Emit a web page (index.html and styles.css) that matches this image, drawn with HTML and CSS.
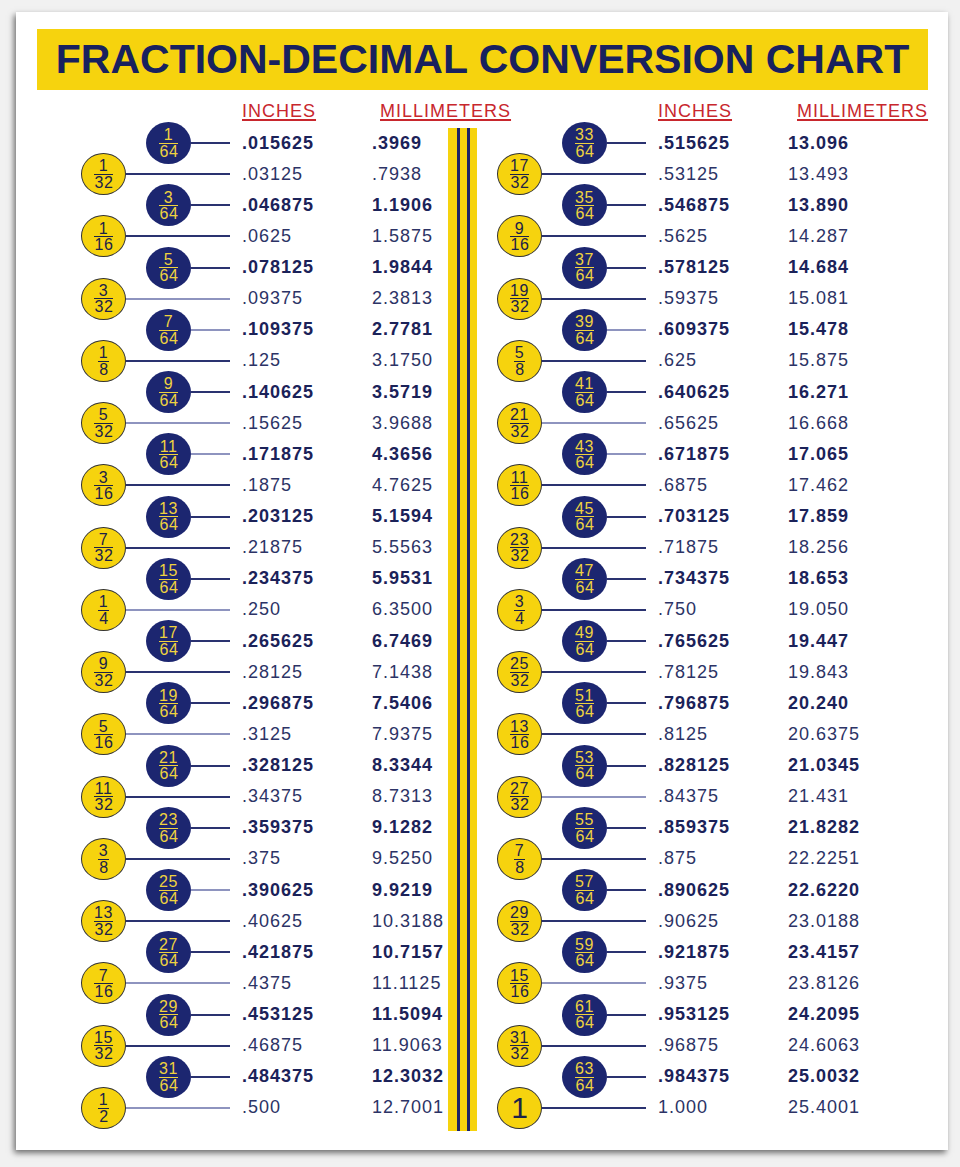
FILE: index.html
```html
<!DOCTYPE html>
<html>
<head>
<meta charset="utf-8">
<title>Fraction-Decimal Conversion Chart</title>
<link rel="stylesheet" href="styles.css">
</head>
<body>
<div class="card">
  <div class="banner">FRACTION-DECIMAL CONVERSION CHART</div>
  <div class="chart">
    <div class="col">
      <div class="hd"><span class="hi">INCHES</span><span class="hm">MILLIMETERS</span></div>
      <div class="rows">
        <div class="row n"><span class="c"><b>1</b><i>64</i></span><span class="ln"></span><span class="in">.015625</span><span class="mm">.3969</span></div>
        <div class="row y"><span class="c"><b>1</b><i>32</i></span><span class="ln"></span><span class="in">.03125</span><span class="mm">.7938</span></div>
        <div class="row n"><span class="c"><b>3</b><i>64</i></span><span class="ln"></span><span class="in">.046875</span><span class="mm">1.1906</span></div>
        <div class="row y"><span class="c"><b>1</b><i>16</i></span><span class="ln"></span><span class="in">.0625</span><span class="mm">1.5875</span></div>
        <div class="row n"><span class="c"><b>5</b><i>64</i></span><span class="ln"></span><span class="in">.078125</span><span class="mm">1.9844</span></div>
        <div class="row y l"><span class="c"><b>3</b><i>32</i></span><span class="ln"></span><span class="in">.09375</span><span class="mm">2.3813</span></div>
        <div class="row n l"><span class="c"><b>7</b><i>64</i></span><span class="ln"></span><span class="in">.109375</span><span class="mm">2.7781</span></div>
        <div class="row y"><span class="c"><b>1</b><i>8</i></span><span class="ln"></span><span class="in">.125</span><span class="mm">3.1750</span></div>
        <div class="row n"><span class="c"><b>9</b><i>64</i></span><span class="ln"></span><span class="in">.140625</span><span class="mm">3.5719</span></div>
        <div class="row y l"><span class="c"><b>5</b><i>32</i></span><span class="ln"></span><span class="in">.15625</span><span class="mm">3.9688</span></div>
        <div class="row n l"><span class="c"><b>11</b><i>64</i></span><span class="ln"></span><span class="in">.171875</span><span class="mm">4.3656</span></div>
        <div class="row y"><span class="c"><b>3</b><i>16</i></span><span class="ln"></span><span class="in">.1875</span><span class="mm">4.7625</span></div>
        <div class="row n"><span class="c"><b>13</b><i>64</i></span><span class="ln"></span><span class="in">.203125</span><span class="mm">5.1594</span></div>
        <div class="row y"><span class="c"><b>7</b><i>32</i></span><span class="ln"></span><span class="in">.21875</span><span class="mm">5.5563</span></div>
        <div class="row n"><span class="c"><b>15</b><i>64</i></span><span class="ln"></span><span class="in">.234375</span><span class="mm">5.9531</span></div>
        <div class="row y l"><span class="c"><b>1</b><i>4</i></span><span class="ln"></span><span class="in">.250</span><span class="mm">6.3500</span></div>
        <div class="row n"><span class="c"><b>17</b><i>64</i></span><span class="ln"></span><span class="in">.265625</span><span class="mm">6.7469</span></div>
        <div class="row y"><span class="c"><b>9</b><i>32</i></span><span class="ln"></span><span class="in">.28125</span><span class="mm">7.1438</span></div>
        <div class="row n"><span class="c"><b>19</b><i>64</i></span><span class="ln"></span><span class="in">.296875</span><span class="mm">7.5406</span></div>
        <div class="row y l"><span class="c"><b>5</b><i>16</i></span><span class="ln"></span><span class="in">.3125</span><span class="mm">7.9375</span></div>
        <div class="row n"><span class="c"><b>21</b><i>64</i></span><span class="ln"></span><span class="in">.328125</span><span class="mm">8.3344</span></div>
        <div class="row y"><span class="c"><b>11</b><i>32</i></span><span class="ln"></span><span class="in">.34375</span><span class="mm">8.7313</span></div>
        <div class="row n"><span class="c"><b>23</b><i>64</i></span><span class="ln"></span><span class="in">.359375</span><span class="mm">9.1282</span></div>
        <div class="row y"><span class="c"><b>3</b><i>8</i></span><span class="ln"></span><span class="in">.375</span><span class="mm">9.5250</span></div>
        <div class="row n l"><span class="c"><b>25</b><i>64</i></span><span class="ln"></span><span class="in">.390625</span><span class="mm">9.9219</span></div>
        <div class="row y"><span class="c"><b>13</b><i>32</i></span><span class="ln"></span><span class="in">.40625</span><span class="mm">10.3188</span></div>
        <div class="row n"><span class="c"><b>27</b><i>64</i></span><span class="ln"></span><span class="in">.421875</span><span class="mm">10.7157</span></div>
        <div class="row y l"><span class="c"><b>7</b><i>16</i></span><span class="ln"></span><span class="in">.4375</span><span class="mm">11.1125</span></div>
        <div class="row n"><span class="c"><b>29</b><i>64</i></span><span class="ln"></span><span class="in">.453125</span><span class="mm">11.5094</span></div>
        <div class="row y"><span class="c"><b>15</b><i>32</i></span><span class="ln"></span><span class="in">.46875</span><span class="mm">11.9063</span></div>
        <div class="row n"><span class="c"><b>31</b><i>64</i></span><span class="ln"></span><span class="in">.484375</span><span class="mm">12.3032</span></div>
        <div class="row y l"><span class="c"><b>1</b><i>2</i></span><span class="ln"></span><span class="in">.500</span><span class="mm">12.7001</span></div>
      </div>
    </div>
    <div class="divider"></div>
    <div class="col right">
      <div class="hd"><span class="hi">INCHES</span><span class="hm">MILLIMETERS</span></div>
      <div class="rows">
        <div class="row n"><span class="c"><b>33</b><i>64</i></span><span class="ln"></span><span class="in">.515625</span><span class="mm">13.096</span></div>
        <div class="row y"><span class="c"><b>17</b><i>32</i></span><span class="ln"></span><span class="in">.53125</span><span class="mm">13.493</span></div>
        <div class="row n"><span class="c"><b>35</b><i>64</i></span><span class="ln"></span><span class="in">.546875</span><span class="mm">13.890</span></div>
        <div class="row y"><span class="c"><b>9</b><i>16</i></span><span class="ln"></span><span class="in">.5625</span><span class="mm">14.287</span></div>
        <div class="row n"><span class="c"><b>37</b><i>64</i></span><span class="ln"></span><span class="in">.578125</span><span class="mm">14.684</span></div>
        <div class="row y"><span class="c"><b>19</b><i>32</i></span><span class="ln"></span><span class="in">.59375</span><span class="mm">15.081</span></div>
        <div class="row n l"><span class="c"><b>39</b><i>64</i></span><span class="ln"></span><span class="in">.609375</span><span class="mm">15.478</span></div>
        <div class="row y"><span class="c"><b>5</b><i>8</i></span><span class="ln"></span><span class="in">.625</span><span class="mm">15.875</span></div>
        <div class="row n"><span class="c"><b>41</b><i>64</i></span><span class="ln"></span><span class="in">.640625</span><span class="mm">16.271</span></div>
        <div class="row y l"><span class="c"><b>21</b><i>32</i></span><span class="ln"></span><span class="in">.65625</span><span class="mm">16.668</span></div>
        <div class="row n l"><span class="c"><b>43</b><i>64</i></span><span class="ln"></span><span class="in">.671875</span><span class="mm">17.065</span></div>
        <div class="row y"><span class="c"><b>11</b><i>16</i></span><span class="ln"></span><span class="in">.6875</span><span class="mm">17.462</span></div>
        <div class="row n"><span class="c"><b>45</b><i>64</i></span><span class="ln"></span><span class="in">.703125</span><span class="mm">17.859</span></div>
        <div class="row y"><span class="c"><b>23</b><i>32</i></span><span class="ln"></span><span class="in">.71875</span><span class="mm">18.256</span></div>
        <div class="row n"><span class="c"><b>47</b><i>64</i></span><span class="ln"></span><span class="in">.734375</span><span class="mm">18.653</span></div>
        <div class="row y"><span class="c"><b>3</b><i>4</i></span><span class="ln"></span><span class="in">.750</span><span class="mm">19.050</span></div>
        <div class="row n"><span class="c"><b>49</b><i>64</i></span><span class="ln"></span><span class="in">.765625</span><span class="mm">19.447</span></div>
        <div class="row y"><span class="c"><b>25</b><i>32</i></span><span class="ln"></span><span class="in">.78125</span><span class="mm">19.843</span></div>
        <div class="row n"><span class="c"><b>51</b><i>64</i></span><span class="ln"></span><span class="in">.796875</span><span class="mm">20.240</span></div>
        <div class="row y"><span class="c"><b>13</b><i>16</i></span><span class="ln"></span><span class="in">.8125</span><span class="mm">20.6375</span></div>
        <div class="row n"><span class="c"><b>53</b><i>64</i></span><span class="ln"></span><span class="in">.828125</span><span class="mm">21.0345</span></div>
        <div class="row y l"><span class="c"><b>27</b><i>32</i></span><span class="ln"></span><span class="in">.84375</span><span class="mm">21.431</span></div>
        <div class="row n"><span class="c"><b>55</b><i>64</i></span><span class="ln"></span><span class="in">.859375</span><span class="mm">21.8282</span></div>
        <div class="row y"><span class="c"><b>7</b><i>8</i></span><span class="ln"></span><span class="in">.875</span><span class="mm">22.2251</span></div>
        <div class="row n"><span class="c"><b>57</b><i>64</i></span><span class="ln"></span><span class="in">.890625</span><span class="mm">22.6220</span></div>
        <div class="row y"><span class="c"><b>29</b><i>32</i></span><span class="ln"></span><span class="in">.90625</span><span class="mm">23.0188</span></div>
        <div class="row n"><span class="c"><b>59</b><i>64</i></span><span class="ln"></span><span class="in">.921875</span><span class="mm">23.4157</span></div>
        <div class="row y l"><span class="c"><b>15</b><i>16</i></span><span class="ln"></span><span class="in">.9375</span><span class="mm">23.8126</span></div>
        <div class="row n"><span class="c"><b>61</b><i>64</i></span><span class="ln"></span><span class="in">.953125</span><span class="mm">24.2095</span></div>
        <div class="row y"><span class="c"><b>31</b><i>32</i></span><span class="ln"></span><span class="in">.96875</span><span class="mm">24.6063</span></div>
        <div class="row n"><span class="c"><b>63</b><i>64</i></span><span class="ln"></span><span class="in">.984375</span><span class="mm">25.0032</span></div>
        <div class="row y"><span class="c one">1</span><span class="ln"></span><span class="in">1.000</span><span class="mm">25.4001</span></div>
      </div>
    </div>
  </div>
</div>
</body>
</html>
```

FILE: styles.css
```css
html, body {
  margin: 0;
  padding: 0;
}
body {
  background: #f1f1f1;
  font-family: "Liberation Sans", Arial, sans-serif;
  width: 960px;
  height: 1167px;
  overflow: hidden;
}
.card {
  margin: 12px 0 0 16px;
  width: 932px;
  height: 1138px;
  background: #fff;
  box-shadow: -2px 3px 6px rgba(0, 0, 0, 0.55);
  padding-top: 17px;
  box-sizing: border-box;
}
.banner {
  margin: 0 20px 0 21px;
  height: 61px;
  line-height: 61px;
  background: #f6d30e;
  color: #18215e;
  font-weight: bold;
  font-size: 41px;
  text-align: center;
  white-space: nowrap;
}
.chart {
  display: flex;
  padding-left: 65px;
  margin-top: 11px;
}
.col {
  width: 367px;
  flex: none;
}
.right {
  margin-left: 20px;
  width: 420px;
}
.hd {
  display: flex;
  height: 20px;
  line-height: 20px;
  font-size: 18px;
  letter-spacing: 1px;
  color: #c8272d;
  white-space: nowrap;
}
.hi, .hm {
  flex: none;
  text-decoration: underline;
  text-decoration-thickness: 1.5px;
  text-underline-offset: 2px;
}
.hi {
  margin-left: 161px;
  width: 130px;
}
.hm {
  margin-left: 8px;
}
.right .hm {
  margin-left: 9px;
}
.rows {
  margin-top: 6.5px;
}
.row {
  display: flex;
  align-items: center;
  height: 31.13px;
}
.c {
  flex: none;
  width: 45px;
  height: 42px;
  border-radius: 50%;
  box-sizing: border-box;
  display: flex;
  flex-direction: column;
  align-items: center;
  justify-content: center;
  font-size: 16px;
  line-height: 15px;
  letter-spacing: 0.5px;
}
.c b {
  font-weight: normal;
}
.c i {
  font-style: normal;
  border-top: 1.5px solid currentColor;
  padding: 0 0 0 1px;
  margin-top: 0.5px;
}
.n .c {
  margin-left: 65px;
  background: #1c2670;
  color: #efd23f;
}
.y .c {
  background: #f6d30e;
  border: 1.5px solid #333;
  color: #1c2248;
}
.c.one {
  font-size: 30px;
  line-height: 30px;
  letter-spacing: 0;
}
.ln {
  flex: none;
  height: 2px;
  background: #2a3270;
  margin-right: 12px;
}
.y .ln {
  width: 104px;
}
.n .ln {
  width: 39px;
}
.l .ln {
  background: #8e94bf;
}
.in, .mm {
  font-size: 18px;
  letter-spacing: 1px;
  color: #2c3366;
  white-space: nowrap;
}
.in {
  width: 130px;
  flex: none;
}
.n .in, .n .mm {
  font-weight: bold;
  color: #1b2259;
}
.divider {
  flex: none;
  width: 29px;
  height: 1003px;
  margin-top: 27px;
  background: linear-gradient(to right, #f6d30e 0 9px, #1c2366 9px 12px, #f6d30e 12px 19px, #1c2366 19px 22px, #f6d30e 22px 100%);
}
```
